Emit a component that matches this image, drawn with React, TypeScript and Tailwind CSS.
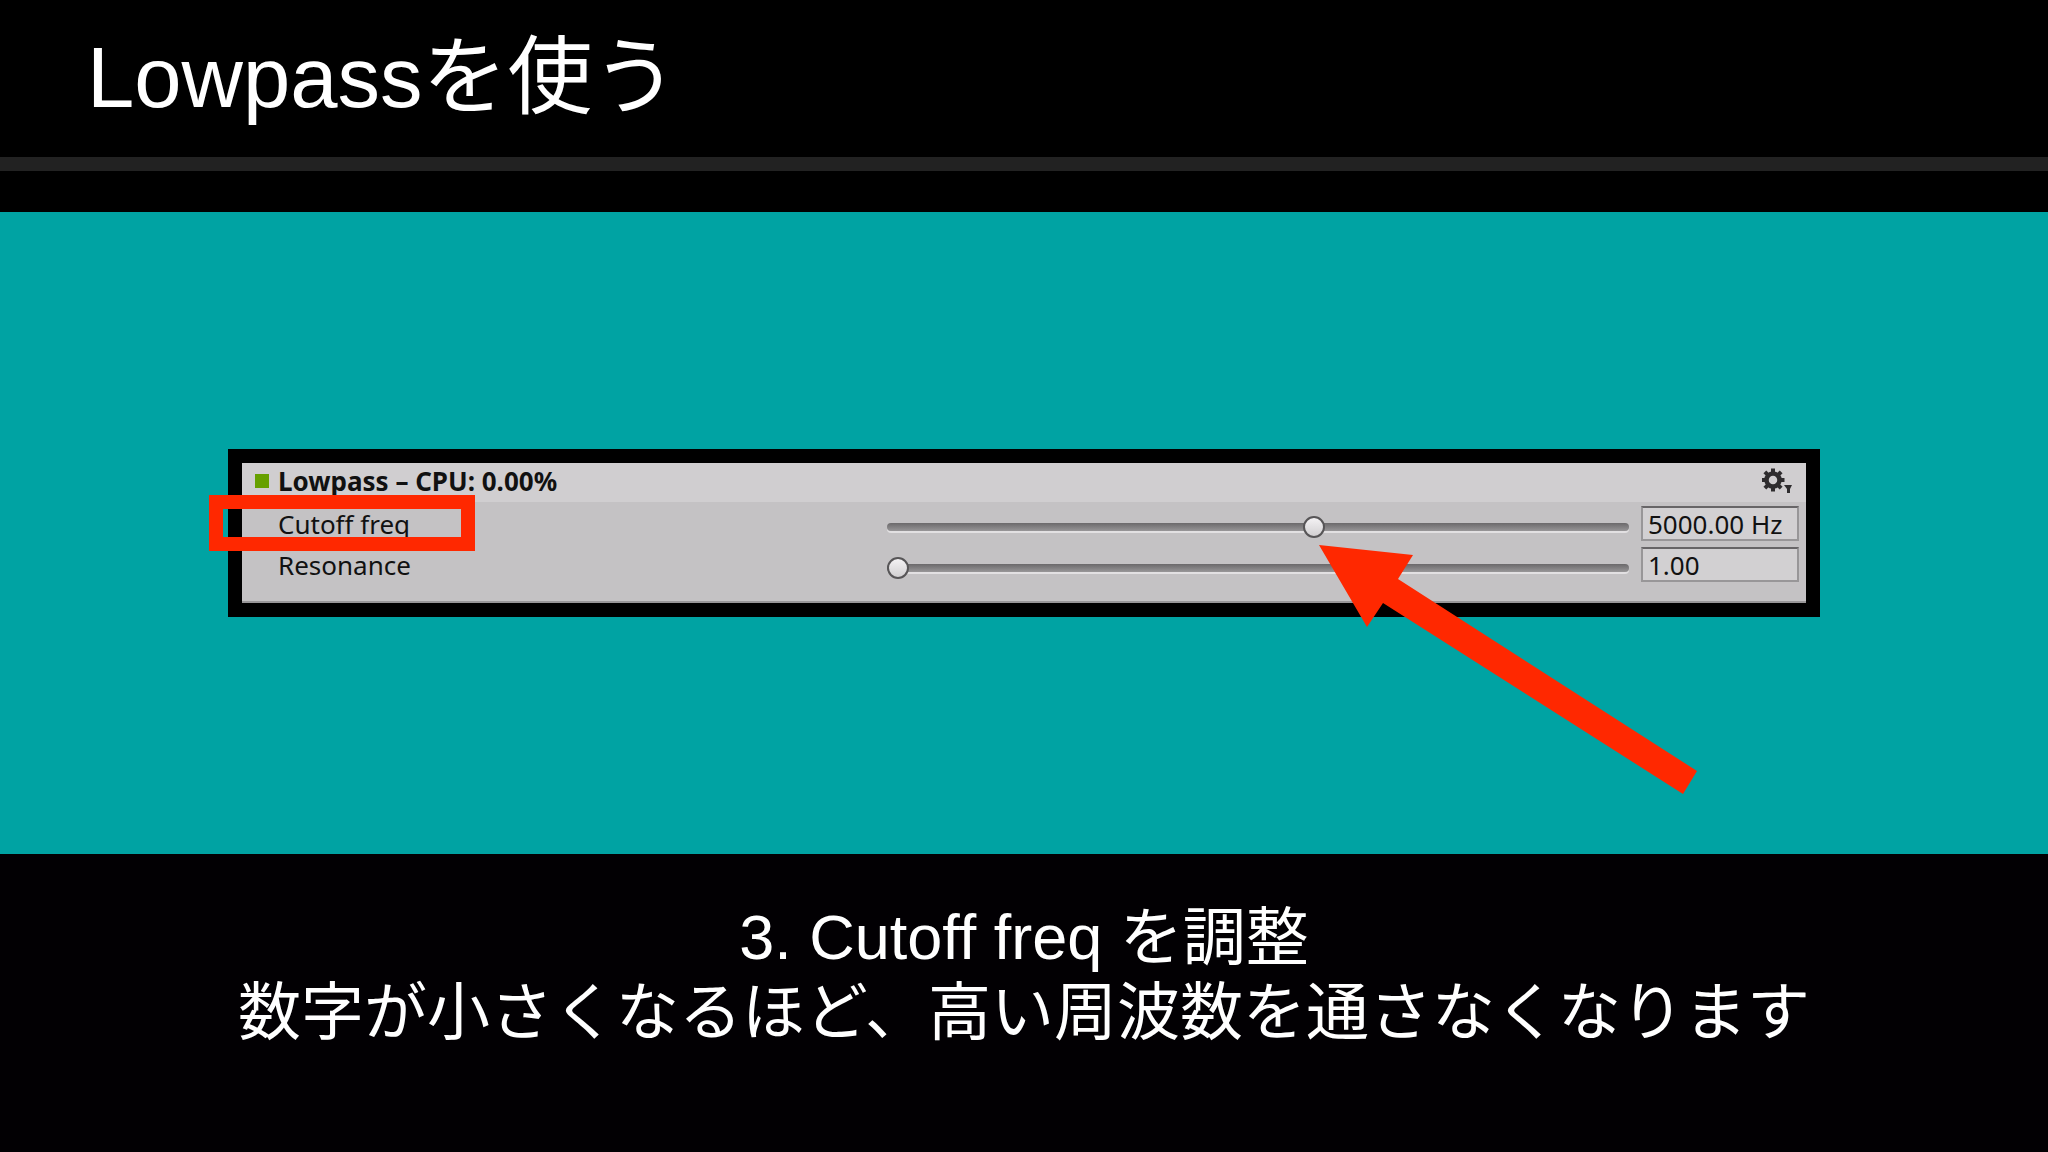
import { useState } from "react"

type Param = {
    id: string
    label: string
    text: string
    position: number
}

const params: Param[] = [
    { id: "cutoff", label: "Cutoff freq", text: "5000.00 Hz", position: 578 },
    { id: "resonance", label: "Resonance", text: "1.00", position: 0 },
]

const GearIcon = () => (
    <svg viewBox="0 0 32 26" className="h-[26px] w-8" fill="#2e2c2e">
        <g transform="translate(11 12)">
            {[0, 45, 90, 135, 180, 225, 270, 315].map((deg) => (
                <rect key={deg} x="-2" y="-11.5" width="4" height="6" transform={`rotate(${deg})`} />
            ))}
            <circle r="6.5" fill="none" stroke="#2e2c2e" strokeWidth="4.5" />
        </g>
        <path d="M22 17h8l-2 4v4h-3v-4z" />
    </svg>
)

const Arrow = () => (
    <svg
        viewBox="0 0 379 250"
        className="pointer-events-none absolute top-[82px] right-[108px] h-[250px] w-[379px]"
        fill="#ff2800"
    >
        <path d="M0 0 94 10 79 34 378 226 364 249 64 58 48 82z" />
    </svg>
)

function ParamRow({ param, highlight }: { param: Param; highlight?: boolean }) {
    const [ position, setPosition ] = useState(param.position)
    const [ text, setText ] = useState(param.text)

    return (
        <div className="flex h-[35px] items-center">
            <div className="relative w-[609px]">
                <label htmlFor={param.id}>{param.label}</label>
                {highlight && (
                    <span className="pointer-events-none absolute -top-3 -left-[69px] h-14 w-[266px] border-[14px] border-[#ff2800]" />
                )}
            </div>
            <input
                id={param.id}
                type="range"
                min={0}
                max={1000}
                value={position}
                onChange={(ev) => setPosition(Number(ev.target.value))}
                className="mt-1.5 h-6 min-w-0 flex-1 appearance-none bg-transparent outline-none [&::-webkit-slider-runnable-track]:h-2 [&::-webkit-slider-runnable-track]:rounded-full [&::-webkit-slider-runnable-track]:bg-linear-to-b [&::-webkit-slider-runnable-track]:from-[#6b696b] [&::-webkit-slider-runnable-track]:to-[#989698] [&::-webkit-slider-runnable-track]:shadow-[0_2px_0_#e2e0e2] [&::-webkit-slider-thumb]:-mt-[7px] [&::-webkit-slider-thumb]:size-[22px] [&::-webkit-slider-thumb]:appearance-none [&::-webkit-slider-thumb]:rounded-full [&::-webkit-slider-thumb]:border-2 [&::-webkit-slider-thumb]:border-[#575557] [&::-webkit-slider-thumb]:bg-linear-to-b [&::-webkit-slider-thumb]:from-[#f4f2f4] [&::-webkit-slider-thumb]:to-[#d2d0d2]"
            />
            <input
                type="text"
                aria-label={`${param.label} value`}
                value={text}
                onChange={(ev) => setText(ev.target.value)}
                className="ml-3 h-[35px] w-[158px] border-2 border-[#989698] border-t-[#676567] bg-[#d2d0d2] px-[5px] outline-none"
            />
        </div>
    )
}

export default function App() {
    return (
        <main className="flex min-h-screen flex-col bg-black font-['Liberation_Sans','Noto_Sans_CJK_JP',sans-serif] text-white">
            <header className="h-[171px] border-b-[14px] border-[#222222] px-[87px] pt-7">
                <h1 className="text-[85px] leading-[100px]">Lowpassを使う</h1>
            </header>

            <section className="mt-[41px] bg-[#00a3a3] px-[228px] py-[237px]">
                <div className="relative border-[14px] border-black bg-[#c4c2c4] font-['Noto_Sans',sans-serif] text-[26px] leading-[34px] text-[#111111]">
                    <div className="flex h-[39px] items-center bg-[#d0ced0] pr-3 pb-1 pl-[13px]">
                        <span className="mr-[9px] size-[14px] bg-[#66a000]" />
                        <h2 className="flex-1 font-bold">Lowpass – CPU: 0.00%</h2>
                        <button type="button" aria-label="Effect settings">
                            <GearIcon />
                        </button>
                    </div>
                    <div className="flex flex-col gap-1.5 border-b-2 border-[#989698] pt-1 pr-[7px] pb-[19px] pl-9">
                        <ParamRow param={params[0]} highlight />
                        <ParamRow param={params[1]} />
                    </div>
                    <Arrow />
                </div>
            </section>

            <section className="flex-1 bg-[#020003] pt-[46px] text-center text-[63px] leading-[75px]">
                <p>3. Cutoff freq を調整</p>
                <p>数字が小さくなるほど、高い周波数を通さなくなります</p>
            </section>
        </main>
    )
}
